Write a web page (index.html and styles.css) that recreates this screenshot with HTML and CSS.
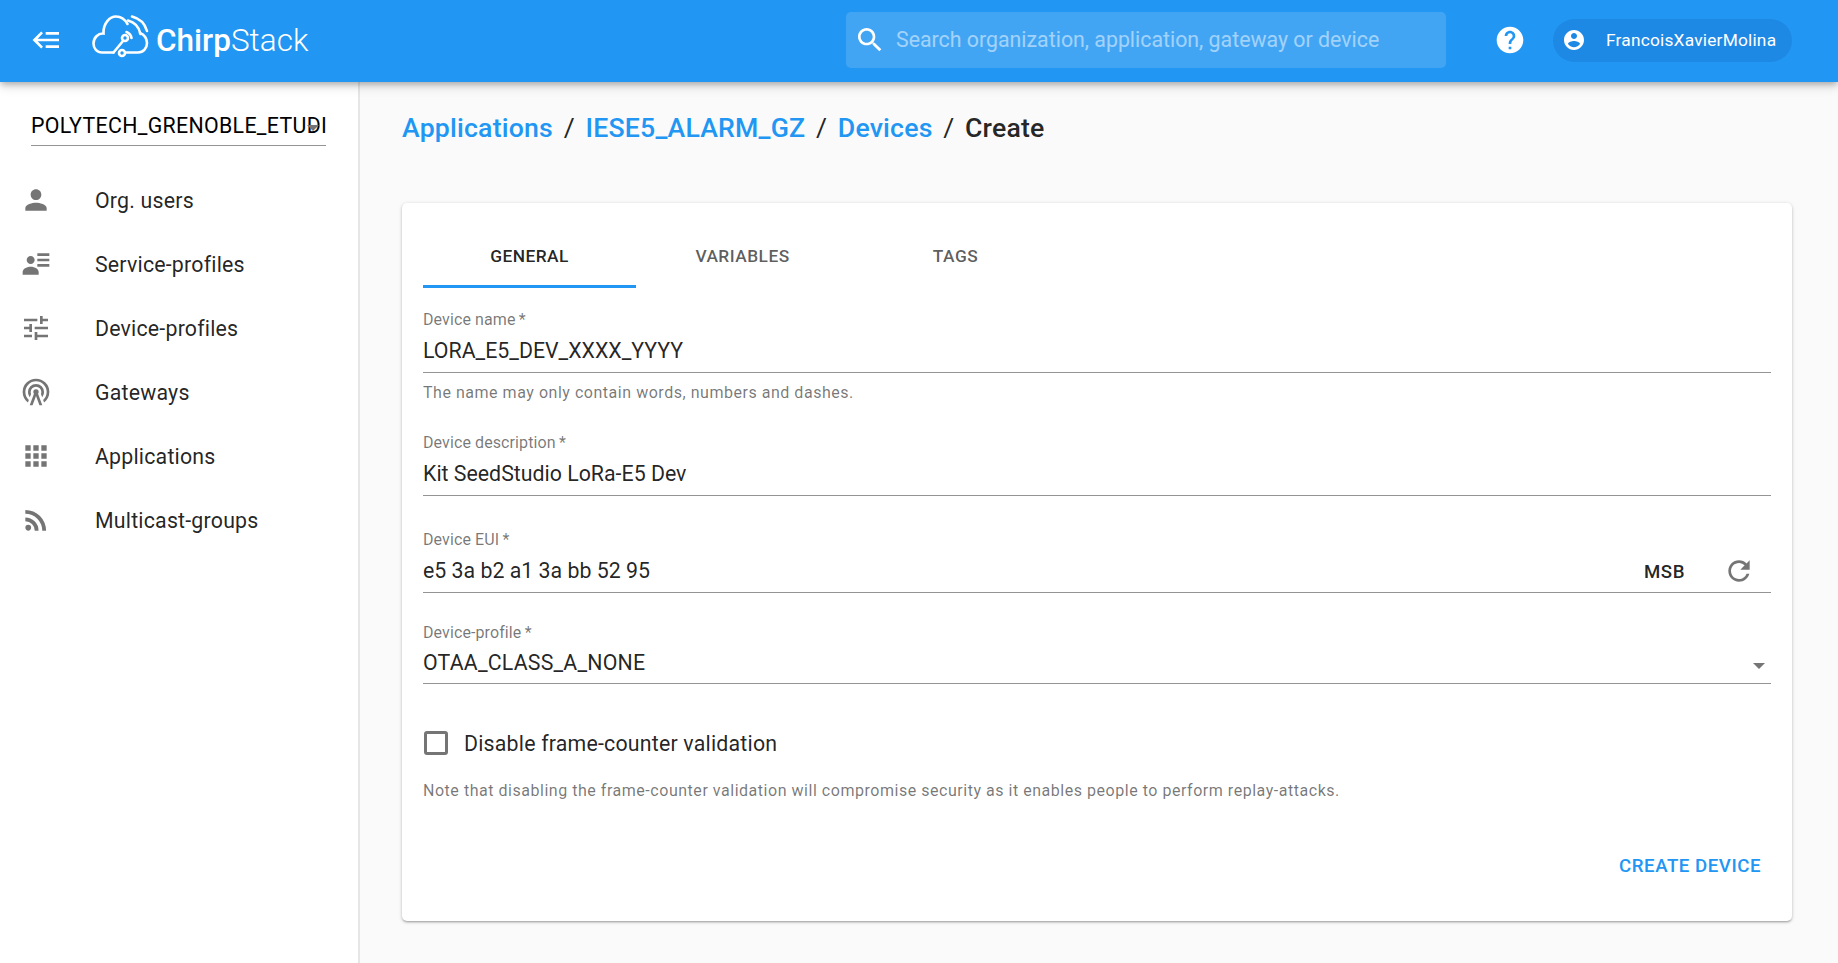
FILE: index.html
```html
<!DOCTYPE html>
<html lang="en">
<head>
<meta charset="utf-8">
<title>ChirpStack</title>
<link rel="stylesheet" href="styles.css">
</head>
<body>
<header class="appbar">
  <svg class="menu-icon" viewBox="0 0 24 24"><path d="M5,13L9,17L7.6,18.42L1.18,12L7.6,5.58L9,7L5,11H21V13H5M21,6V8H11V6H21M21,16V18H11V16H21Z"/></svg>
  <div class="logo">
    <svg class="logo-mark" viewBox="0 0 60 46" fill="none" stroke="#fff" stroke-width="2.6" stroke-linecap="round">
      <path d="M23.500 39.500H12C7 39.500 3.500 35.500 3.500 30.500C3.500 25 8 20 13.500 20.500C13 10 20 3.500 26 3.500C31 3.500 35 6.500 37.500 11"/>
      <path d="M36 39.500H48C53.500 39.500 57 35 57 30C57 26 54.500 21.500 50 20"/>
      <path d="M33 28L23.500 39.500"/>
      <circle cx="35" cy="25" r="3"/>
      <circle cx="32" cy="40" r="3"/>
      <path d="M36.500 19C39 20 41 22 41.500 25"/>
      <path d="M38 7.500C44 9 49 14 50.500 21"/>
      <path d="M42 3.500C50 5.500 55 11 57 18"/>
    </svg>
    <span class="logo-text"><b>Chirp</b>Stack</span>
  </div>
  <div class="search">
    <svg class="search-icon" viewBox="0 0 24 24"><path d="M15.500 14h-.79l-.28-.27C15.410 12.590 16 11.110 16 9.500 16 5.910 13.090 3 9.500 3S3 5.910 3 9.500 5.910 16 9.500 16c1.610 0 3.090-.59 4.230-1.570l.27.28v.79l5 4.990L20.490 19l-4.990-5zm-6 0C7.010 14 5 11.990 5 9.500S7.010 5 9.500 5 14 7.010 14 9.500 11.990 14 9.500 14z"/></svg>
    <span class="search-text">Search organization, application, gateway or device</span>
  </div>
  <svg class="help-icon" viewBox="0 0 24 24"><path d="M12 2C6.480 2 2 6.480 2 12s4.480 10 10 10 10-4.480 10-10S17.520 2 12 2zm1 17h-2v-2h2v2zm2.070-7.750l-.9.920C13.450 12.900 13 13.500 13 15h-2v-.5c0-1.100.45-2.100 1.170-2.830l1.240-1.260c.37-.36.59-.86.59-1.410 0-1.100-.9-2-2-2s-2 .9-2 2H8c0-2.210 1.790-4 4-4s4 1.790 4 4c0 .88-.36 1.680-.93 2.250z"/></svg>
  <div class="user-chip">
    <svg class="user-icon" viewBox="0 0 24 24"><path d="M12 2C6.480 2 2 6.480 2 12s4.480 10 10 10 10-4.480 10-10S17.520 2 12 2zm0 3c1.660 0 3 1.340 3 3s-1.340 3-3 3-3-1.340-3-3 1.340-3 3-3zm0 14.200c-2.500 0-4.710-1.280-6-3.220.03-1.990 4-3.080 6-3.080 1.990 0 5.970 1.090 6 3.080-1.290 1.940-3.500 3.220-6 3.220z"/></svg>
    <span class="user-name">FrancoisXavierMolina</span>
  </div>
</header>
<div class="body-row">
  <aside class="sidebar">
    <div class="org-select">
      <span class="org-value">POLYTECH_GRENOBLE_ETUDIANTS</span>
      <span class="org-arrow"></span>
    </div>
    <nav class="nav">
      <a class="nav-item"><svg class="nav-icon" viewBox="0 0 24 24"><path d="M12 12c2.210 0 4-1.790 4-4s-1.790-4-4-4-4 1.790-4 4 1.790 4 4 4zm0 2c-2.670 0-8 1.340-8 4v2h16v-2c0-2.660-5.330-4-8-4z"/></svg><span>Org. users</span></a>
      <a class="nav-item"><svg class="nav-icon" viewBox="0 0 24 24"><path d="M11,9C11,10.660 9.660,12 8,12C6.340,12 5,10.660 5,9C5,7.340 6.340,6 8,6C9.660,6 11,7.340 11,9M14,20H2V18C2,15.790 4.690,14 8,14C11.310,14 14,15.790 14,18M22,12V14H13V12M22,8V10H13V8M22,4V6H13V4Z"/></svg><span>Service-profiles</span></a>
      <a class="nav-item"><svg class="nav-icon" viewBox="0 0 24 24"><path d="M3 17v2h6v-2H3zM3 5v2h10V5H3zm10 16v-2h8v-2h-8v-2h-2v6h2zM7 9v2H3v2h4v2h2V9H7zm14 4v-2H11v2h10zm-6-4h2V7h4V5h-4V3h-2v6z"/></svg><span>Device-profiles</span></a>
      <a class="nav-item"><svg class="nav-icon" viewBox="0 0 24 24"><path d="M12,10A2,2 0 0,1 14,12C14,12.500 13.820,12.940 13.530,13.290L16.700,22H14.570L12,14.930L9.430,22H7.300L10.470,13.290C10.180,12.940 10,12.500 10,12A2,2 0 0,1 12,10M12,8A4,4 0 0,0 8,12C8,12.500 8.100,13 8.280,13.460L7.400,15.860C6.530,14.810 6,13.470 6,12A6,6 0 0,1 12,6A6,6 0 0,1 18,12C18,13.470 17.470,14.810 16.600,15.860L15.720,13.460C15.900,13 16,12.500 16,12A4,4 0 0,0 12,8M12,4A8,8 0 0,0 4,12C4,14.360 5,16.500 6.640,17.940L5.920,19.940C3.540,18.110 2,15.230 2,12A10,10 0 0,1 12,2A10,10 0 0,1 22,12C22,15.230 20.460,18.110 18.080,19.940L17.360,17.940C19,16.500 20,14.360 20,12A8,8 0 0,0 12,4Z"/></svg><span>Gateways</span></a>
      <a class="nav-item"><svg class="nav-icon" viewBox="0 0 24 24"><path d="M4 8h4V4H4v4zm6 12h4v-4h-4v4zm-6 0h4v-4H4v4zm0-6h4v-4H4v4zm6 0h4v-4h-4v4zm6-10v4h4V4h-4zm-6 4h4V4h-4v4zm6 6h4v-4h-4v4zm0 6h4v-4h-4v4z"/></svg><span>Applications</span></a>
      <a class="nav-item"><svg class="nav-icon" viewBox="0 0 24 24"><path d="M6.180,15.640A2.180,2.180 0 0,1 8.360,17.820C8.360,19 7.380,20 6.180,20C5,20 4,19 4,17.820A2.180,2.180 0 0,1 6.180,15.640M4,4.440A15.560,15.560 0 0,1 19.560,20H16.730A12.730,12.730 0 0,0 4,7.270V4.440M4,10.100A9.900,9.900 0 0,1 13.900,20H11.070A7.070,7.070 0 0,0 4,12.930V10.100Z"/></svg><span>Multicast-groups</span></a>
    </nav>
  </aside>
  <main class="content">
    <div class="breadcrumb">
      <a class="crumb-link">Applications</a><span class="crumb-sep">/</span>
      <a class="crumb-link">IESE5_ALARM_GZ</a><span class="crumb-sep">/</span>
      <a class="crumb-link">Devices</a><span class="crumb-sep">/</span>
      <span class="crumb-current">Create</span>
    </div>
    <section class="card">
      <div class="tabs">
        <div class="tab tab-active">General</div>
        <div class="tab">Variables</div>
        <div class="tab">Tags</div>
      </div>
      <div class="field field-name">
        <div class="field-label">Device name&thinsp;*</div>
        <div class="field-input">LORA_E5_DEV_XXXX_YYYY</div>
        <div class="field-help">The name may only contain words, numbers and dashes.</div>
      </div>
      <div class="field field-desc">
        <div class="field-label">Device description&thinsp;*</div>
        <div class="field-input">Kit SeedStudio LoRa-E5 Dev</div>
      </div>
      <div class="field field-eui">
        <div class="field-label">Device EUI&thinsp;*</div>
        <div class="field-input">
          <span class="grow">e5 3a b2 a1 3a bb 52 95</span>
          <span class="msb">MSB</span>
          <svg class="refresh-icon" viewBox="0 0 24 24"><path d="M17.650 6.350C16.200 4.900 14.210 4 12 4c-4.420 0-7.990 3.580-7.990 8s3.570 8 7.990 8c3.730 0 6.840-2.550 7.730-6h-2.080c-.82 2.330-3.040 4-5.650 4-3.310 0-6-2.690-6-6s2.690-6 6-6c1.660 0 3.140.69 4.220 1.780L13 11h7V4l-2.350 2.350z"/></svg>
        </div>
      </div>
      <div class="field field-profile">
        <div class="field-label">Device-profile&thinsp;*</div>
        <div class="field-input field-input-select">
          <span class="grow">OTAA_CLASS_A_NONE</span>
          <span class="select-arrow"></span>
        </div>
      </div>
      <label class="check-row">
        <span class="checkbox"></span>
        <span class="check-label">Disable frame-counter validation</span>
      </label>
      <p class="note">Note that disabling the frame-counter validation will compromise security as it enables people to perform replay-attacks.</p>
      <div class="actions"><button class="create-btn">Create device</button></div>
    </section>
  </main>
</div>
</body>
</html>
```

FILE: styles.css
```css
* { box-sizing: border-box; }
html, body { margin: 0; height: 963px; overflow: hidden; }
body { font-family: Roboto, "Liberation Sans", sans-serif; background: #fafafa; color: rgba(0,0,0,.87); }

.appbar { position: relative; z-index: 2; height: 82px; padding-bottom: 2px; background: #2196f3; display: flex; align-items: center; box-shadow: 0 3px 6px -1px rgba(0,0,0,.25), 0 5px 10px rgba(0,0,0,.12); color: #fff; fill: #fff; }
.menu-icon { width: 32px; height: 32px; margin-left: 31px; flex: none; }
.logo { display: flex; align-items: center; margin-left: 27px; width: 756px; flex: none; }
.logo-mark { width: 60px; height: 46px; margin-top: -8px; flex: none; }
.logo-text { font-size: 31.5px; font-weight: 300; margin-left: 6px; letter-spacing: 0; }
.logo-text b { font-weight: 500; }
.search { width: 600px; height: 56px; border-radius: 5px; background: rgba(255,255,255,.15); display: flex; align-items: center; padding-left: 8px; flex: none; }
.search-icon { width: 32px; height: 32px; flex: none; }
.search-text { font-size: 21.33px; margin-left: 10px; margin-top: -2px; opacity: .5; }
.help-icon { width: 32px; height: 32px; margin-left: 48px; flex: none; }
.user-chip { margin-left: 27px; width: 239px; height: 43px; border-radius: 22px; background: #1e88e5; display: flex; align-items: center; padding-left: 9px; flex: none; }
.user-icon { width: 24px; height: 24px; flex: none; }
.user-name { font-size: 17.33px; margin-left: 20px; letter-spacing: .2px; white-space: nowrap; }

.body-row { display: flex; height: 881px; }
.sidebar { width: 360px; flex: none; background: #fff; border-right: 2px solid #e6e6e6; padding-top: 28px; }
.org-select { position: relative; margin-left: 31px; width: 295px; height: 36px; border-bottom: 1px solid #949494; overflow: hidden; }
.org-value { display: block; font-size: 21.33px; line-height: 18px; padding-top: 7px; white-space: nowrap; color: #000; letter-spacing: .33px; }
.org-arrow { position: absolute; right: 7.500px; top: 15px; border-left: 6.500px solid transparent; border-right: 6.500px solid transparent; border-top: 6.500px solid #757575; }
.nav { margin-top: 22px; }
.nav-item { display: flex; align-items: center; height: 64px; padding-left: 20px; font-size: 21.33px; letter-spacing: .2px; }
.nav-icon { width: 32px; height: 32px; fill: #757575; margin-right: 43px; flex: none; }

.content { flex: 1; padding: 27px 46px 0 42px; }
.breadcrumb { display: flex; align-items: center; height: 38px; font-size: 26.67px; font-weight: 500; letter-spacing: .2px; }
.crumb-link { color: #2196f3; }
.crumb-sep { margin: 0 10.600px; font-weight: 400; color: rgba(0,0,0,.87); }
.crumb-current { color: rgba(0,0,0,.87); }

.card { margin-top: 56px; height: 718px; background: #fff; border-radius: 5px; box-shadow: 0 2px 2px -1px rgba(0,0,0,.2), 0 1px 3px rgba(0,0,0,.14), 0 1px 4px rgba(0,0,0,.12); padding: 0 21px; }
.tabs { display: flex; padding-top: 21px; height: 85px; }
.tab { width: 213px; height: 64px; display: flex; align-items: center; justify-content: center; font-size: 17.33px; font-weight: 500; letter-spacing: .46px; text-transform: uppercase; color: rgba(0,0,0,.65); }
.tab-active { color: rgba(0,0,0,.87); box-shadow: inset 0 -3px 0 #2196f3; }

.field-label { font-size: 16px; line-height: 20px; color: rgba(0,0,0,.54); letter-spacing: .1px; }
.field-input { display: flex; align-items: center; height: 43px; padding-bottom: 1px; font-size: 21.33px; border-bottom: 1px solid #949494; color: rgba(0,0,0,.87); }
.field-input-select { height: 41px; letter-spacing: .2px; }
.grow { flex: 1; }
.field-help { font-size: 16px; line-height: 20px; margin-top: 10px; color: rgba(0,0,0,.54); letter-spacing: .53px; }
.field-name { padding-top: 22px; }
.field-desc { margin-top: 30px; }
.field-eui { margin-top: 34px; }
.field-profile { margin-top: 30px; }
.msb { font-size: 18.67px; font-weight: 500; letter-spacing: .53px; margin-top: 2px; }
.refresh-icon { width: 32px; height: 32px; fill: #757575; margin-left: 38px; margin-right: 16px; margin-top: 1px; flex: none; }
.select-arrow { width: 0; height: 0; border-left: 6.670px solid transparent; border-right: 6.670px solid transparent; border-top: 6.670px solid #757575; margin-right: 6px; margin-top: 7px; }

.check-row { display: flex; align-items: center; margin-top: 43px; height: 32px; }
.checkbox { width: 24px; height: 24px; margin-left: 1px; border: 3px solid #757575; border-radius: 3px; flex: none; }
.check-label { font-size: 21.33px; margin-left: 16px; letter-spacing: .2px; }
.note { margin: 22px 0 0; font-size: 16px; line-height: 20px; color: rgba(0,0,0,.54); letter-spacing: .53px; }
.actions { display: flex; justify-content: flex-end; margin-top: 54px; padding-right: 10px; }
.create-btn { border: 0; background: none; padding: 0; font: 500 18.67px Roboto, sans-serif; letter-spacing: .53px; text-transform: uppercase; color: #2196f3; }
```
